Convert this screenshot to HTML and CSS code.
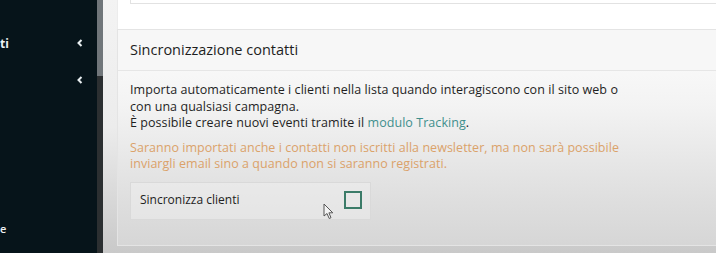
FILE: index.html
```html
<!DOCTYPE html>
<html lang="it">
<head>
<meta charset="utf-8">
<link rel="stylesheet" href="styles.css">
</head>
<body>
<div class="app">
  <aside class="sidebar">
    <div class="nav-item first"><span class="nav-label">ti</span><svg class="chev" width="6" height="8" viewBox="0 0 6 8"><path d="M4.5 1 L1.5 4 L4.5 7" fill="none" stroke="#e8eef0" stroke-width="2"/></svg></div>
    <div class="nav-item"><span class="nav-label"></span><svg class="chev" width="6" height="8" viewBox="0 0 6 8"><path d="M4.5 1 L1.5 4 L4.5 7" fill="none" stroke="#e8eef0" stroke-width="2"/></svg></div>
    <div class="spacer"></div>
    <div class="nav-item last"><span class="nav-label small">e</span></div>
  </aside>
  <div class="scrollbar"><div class="thumb"></div></div>
  <main class="main">
    <div class="prev-card"><div class="prev-inner"></div></div>
    <section class="card">
      <header class="card-header">Sincronizzazione contatti</header>
      <div class="card-body">
        <p class="desc">Importa automaticamente i clienti nella lista quando interagiscono con il sito web o<br>con una qualsiasi campagna.<br>È possibile creare nuovi eventi tramite il <a class="link" href="#">modulo Tracking</a>.</p>
        <p class="warn">Saranno importati anche i contatti non iscritti alla newsletter, ma non sarà possibile<br>inviargli email sino a quando non si saranno registrati.</p>
        <div class="sync-box">
          <span class="sync-label">Sincronizza clienti</span>
          <span class="checkbox"></span>
          <svg class="cursor" width="12" height="17" viewBox="0 0 12 17"><path d="M1 1 L1 13 L4 10.5 L6.2 15.5 L8 14.7 L5.9 9.8 L9.8 9.8 Z" fill="#f4f4f4" stroke="#555" stroke-width="1"/></svg>
        </div>
      </div>
    </section>
  </main>
</div>
</body>
</html>
```
FILE: styles.css
```css
* { box-sizing: border-box; }
html, body { margin: 0; padding: 0; }
body {
  width: 716px;
  height: 253px;
  overflow: hidden;
  font-family: "Open Sans", "Liberation Sans", sans-serif;
  background: #d0d0d0;
}
.app {
  display: flex;
  height: 253px;
}
.sidebar {
  width: 97px;
  flex: none;
  background: #06141a;
  display: flex;
  flex-direction: column;
  padding-top: 34px;
}
.nav-item {
  height: 18px;
  display: flex;
  align-items: center;
  justify-content: space-between;
  padding-right: 14px;
  color: #eef2f3;
  font-weight: 700;
  font-size: 12px;
  margin-bottom: 19px;
}
.nav-label { width: 10px; }
.spacer { flex: 1; }
.nav-item.last { margin-bottom: 16px; }
.nav-label.small { font-weight: 600; font-size: 11px; }
.scrollbar {
  width: 6px;
  flex: none;
  background: #2b2f31;
}
.thumb {
  height: 76px;
  background: #70767a;
}
.main {
  flex: 1;
  min-width: 0;
  background: linear-gradient(to bottom, #f3f3f3 0%, #ececec 50%, #c9c9c9 100%);
  padding-left: 14px;
  display: flex;
  flex-direction: column;
}
.prev-card {
  height: 29px;
  background: #fff;
  border-left: 1px solid #ececec;
  padding-left: 12px;
}
.prev-inner {
  height: 4px;
  border-left: 1px solid #e2e2e2;
  border-bottom: 1px solid #e2e2e2;
}
.card {
  border: 1px solid #e4e4e4;
  border-right: none;
  height: 217px;
  display: flex;
  flex-direction: column;
  background: linear-gradient(to bottom, #fdfdfd 0%, #f3f3f3 35%, #dedede 80%, #d6d6d6 100%);
}
.card-header {
  height: 41px;
  flex: none;
  background: #f7f7f7;
  border-bottom: 1px solid #e6e6e6;
  display: flex;
  align-items: center;
  padding-left: 12px;
  padding-bottom: 2px;
  font-size: 14.5px;
  color: #1e1e1e;
}
.card-body {
  padding: 11px 0 0 12px;
  font-size: 12.5px;
}
.desc, .warn {
  margin: 0;
  line-height: 16.6px;
}
.desc { color: #1f1f1f; letter-spacing: 0.06px; }
.link { color: #3f8f8d; text-decoration: none; }
.warn {
  color: #dba26a;
  margin-top: 8px;
  letter-spacing: 0.04px;
}
.sync-box {
  position: relative;
  margin-top: 9px;
  width: 241px;
  height: 38px;
  border: 1px solid #d9d9d9;
  display: flex;
  align-items: center;
  justify-content: space-between;
  padding: 0 8px 2px 9px;
  background: rgba(240,240,240,0.5);
}
.sync-label {
  font-size: 12px;
  color: #222;
}
.checkbox {
  width: 18px;
  height: 18px;
  border: 2px solid #3b7b68;
}
.cursor {
  position: absolute;
  left: 192px;
  top: 20px;
}
```
